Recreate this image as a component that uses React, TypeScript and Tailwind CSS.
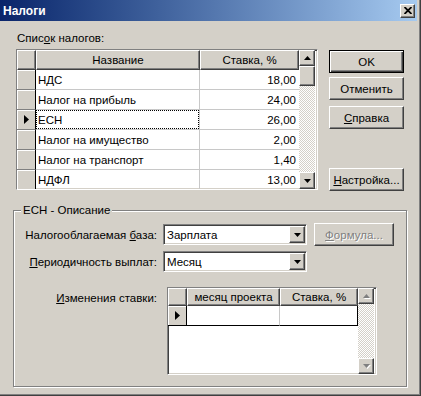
import React from "react";

// classic 3D borders
const raised =
  "border border-t-white border-l-white border-r-[#404040] border-b-[#404040] shadow-[inset_-1px_-1px_0_#808080] bg-[#d4d0c8]";
const sunken =
  "border border-t-[#808080] border-l-[#808080] border-r-white border-b-white shadow-[inset_1px_1px_0_#404040,inset_-1px_-1px_0_#d4d0c8]";
const track = "bg-[repeating-conic-gradient(#d4d0c8_0_25%,#ffffff_0_50%)] bg-[length:2px_2px]";

const Arrow = ({ dir, disabled }: { dir: "up" | "down"; disabled?: boolean }) => (
  <svg width="7" height="4" viewBox="0 0 7 4" className={disabled ? "drop-shadow-[1px_1px_0_#ffffff]" : ""}>
    <polygon points={dir === "up" ? "3.5,0 7,4 0,4" : "0,0 7,0 3.5,4"} fill={disabled ? "#808080" : "#000"} />
  </svg>
);

const ScrollBtn = ({ dir, disabled, h = "h-[16px]" }: { dir: "up" | "down"; disabled?: boolean; h?: string }) => (
  <div className={`${raised} w-[16px] ${h} shrink-0 flex items-center justify-center`}>
    <Arrow dir={dir} disabled={disabled} />
  </div>
);

const Pointer = () => (
  <svg width="5" height="9" viewBox="0 0 5 9">
    <polygon points="0,0 5,4.5 0,9" fill="#000" />
  </svg>
);

const Button = ({ children, cls = "" }: { children: React.ReactNode; cls?: string }) => (
  <div className={`${raised} w-[75px] h-[23px] flex items-center justify-center ${cls}`}>{children}</div>
);

const Combo = ({ value }: { value: string }) => (
  <div className={`${sunken} w-[144px] h-[21px] bg-white flex items-center pl-[3px] pr-[1px]`}>
    <span className="flex-1">{value}</span>
    <ScrollBtn dir="down" h="h-[17px]" />
  </div>
);

const taxes = [
  { name: "НДС", rate: "18,00" },
  { name: "Налог на прибыль", rate: "24,00" },
  { name: "ЕСН", rate: "26,00", active: true },
  { name: "Налог на имущество", rate: "2,00" },
  { name: "Налог на транспорт", rate: "1,40" },
  { name: "НДФЛ", rate: "13,00" },
];

export default function App() {
  return (
    <div className="w-[421px] h-[396px] overflow-hidden bg-[#d4d0c8] text-black text-[11.5px] leading-[14px] font-['Liberation_Sans',Arial,sans-serif] border-r border-b border-r-[#404040] border-b-[#404040] shadow-[inset_-1px_-1px_0_#808080]">
      {/* title bar */}
      <div className="w-[417px] h-[21px] flex items-center bg-gradient-to-r from-[#0a246a] to-[#a6caf0] pl-[3px] pr-[2px]">
        <span className="flex-1 text-white font-bold text-[12px]">Налоги</span>
        <div className={`${raised} w-[15px] h-[14px] flex items-center justify-center`}>
          <svg width="8" height="7" viewBox="0 0 8 7">
            <path d="M0.5 0 L7.5 7 M7.5 0 L0.5 7" stroke="#000" strokeWidth="1.8" />
          </svg>
        </div>
      </div>

      <div className="ml-[17px] mt-[10px]">
        Спис<span className="underline">о</span>к налогов:
      </div>

      <div className="flex mt-[4px] ml-[16px]">
        {/* tax grid */}
        <div className={`${sunken} w-[302px] h-[141px] flex bg-white overflow-hidden`}>
          <div className="w-[282px] flex flex-col">
            <div className="flex h-[20px] shrink-0">
              <div className={`${raised} w-[19px]`} />
              <div className={`${raised} w-[164px] flex items-center justify-center`}>Название</div>
              <div className={`${raised} w-[99px] flex items-center justify-center`}>Ставка, %</div>
            </div>
            {taxes.map((t) => (
              <div key={t.name} className="flex h-[20px] shrink-0">
                <div className="w-[19px] bg-[#d4d0c8] border-r border-b border-r-black border-b-[#808080] shadow-[inset_1px_1px_0_#fff] flex items-center justify-center pl-[1px]">
                  {t.active && <Pointer />}
                </div>
                <div className="w-[164px] border-r border-b border-[#c8c8c8] flex">
                  <div className={`flex-1 flex items-center pl-[1px] border ${t.active ? "border-dotted border-black" : "border-transparent"}`}>
                    {t.name}
                  </div>
                </div>
                <div className="w-[99px] border-b border-[#c8c8c8] flex items-center justify-end pr-[3px]">{t.rate}</div>
              </div>
            ))}
          </div>
          <div className="w-[16px] flex flex-col">
            <ScrollBtn dir="up" />
            <div className={`${raised} w-[16px] h-[20px] shrink-0`} />
            <div className={`flex-1 ${track}`} />
            <ScrollBtn dir="down" h="h-[17px]" />
          </div>
        </div>

        {/* buttons */}
        <div className="ml-[11px] w-[75px] flex flex-col">
          <div className="mt-[1px] w-[75px] h-[23px] border border-black">
            <div className="w-full h-full bg-[#d4d0c8] shadow-[inset_1px_1px_0_#fff,inset_-1px_-1px_0_#404040,inset_-2px_-2px_0_#808080] flex items-center justify-center">
              OK
            </div>
          </div>
          <Button cls="mt-[4px]">Отменить</Button>
          <Button cls="mt-[6px]">
            <span className="underline">С</span>правка
          </Button>
          <Button cls="mt-[39px]">
            <span className="underline">Н</span>астройка...
          </Button>
        </div>
      </div>

      {/* group box */}
      <div className="relative ml-[13px] mt-[19px] w-[394px] h-[177px] border border-[#808080] shadow-[inset_1px_1px_0_#fff,1px_1px_0_#fff]">
        <span className="absolute left-[7px] -top-[8px] px-[2px] bg-[#d4d0c8]">ЕСН - Описание</span>

        <div className="flex items-center mt-[12px]">
          <div className="w-[143px] text-right">
            Налогооблагаемая <span className="underline">б</span>аза:
          </div>
          <div className="ml-[6px]">
            <Combo value="Зарплата" />
          </div>
          <div className={`${raised} ml-[7px] w-[80px] h-[23px] flex items-center justify-center text-[#808080] [text-shadow:1px_1px_0_#fff]`}>
            <span className="underline">Ф</span>ормула...
          </div>
        </div>

        <div className="flex items-center mt-[5px]">
          <div className="w-[143px] text-right">
            <span className="underline">П</span>ериодичность выплат:
          </div>
          <div className="ml-[6px]">
            <Combo value="Месяц" />
          </div>
        </div>

        <div className="flex mt-[15px]">
          <div className="w-[143px] text-right pt-[4px]">
            <span className="underline">И</span>зменения ставки:
          </div>
          {/* rate changes grid */}
          <div className={`${sunken} ml-[10px] w-[210px] h-[88px] flex bg-white overflow-hidden`}>
            <div className="w-[190px] flex flex-col">
              <div className="flex h-[18px] shrink-0">
                <div className={`${raised} w-[19px]`} />
                <div className={`${raised} w-[93px] flex items-center justify-center`}>месяц проекта</div>
                <div className={`${raised} w-[78px] flex items-center justify-center`}>Ставка, %</div>
              </div>
              <div className="flex h-[20px] shrink-0">
                <div className="w-[19px] bg-[#d4d0c8] border-r border-b border-r-black border-b-black shadow-[inset_1px_1px_0_#fff] flex items-center justify-center pl-[1px]">
                  <Pointer />
                </div>
                <div className="w-[93px] border-r border-b border-r-[#c8c8c8] border-b-black" />
                <div className="w-[78px] border-r border-b border-black" />
              </div>
            </div>
            <div className="w-[16px] flex flex-col">
              <ScrollBtn dir="up" disabled />
              <div className={`flex-1 ${track}`} />
              <ScrollBtn dir="down" disabled />
            </div>
          </div>
        </div>
      </div>
    </div>
  );
}
